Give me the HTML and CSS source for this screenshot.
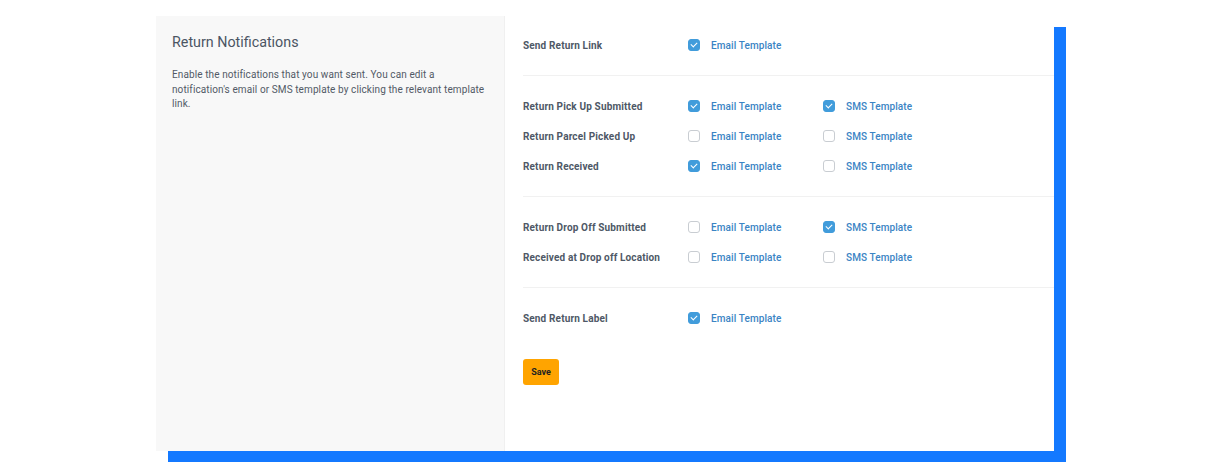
FILE: index.html
```html
<!DOCTYPE html>
<html lang="en">
<head>
    <meta charset="UTF-8">
    <title>Return Notifications</title>
    <link rel="stylesheet" href="styles.css">
</head>
<body>
<div class="page">
    <div class="card">
        <div class="intro">
            <h2 class="intro-title">Return Notifications</h2>
            <p class="intro-text">Enable the notifications that you want sent. You can edit a notification's email or SMS template by clicking the relevant template link.</p>
        </div>

        <div class="settings">
            <div class="section">
                <div class="row">
                    <div class="label">Send Return Link</div>
                    <div class="option"><span class="check on"></span><a href="#">Email Template</a></div>
                </div>
            </div>

            <div class="section">
                <div class="row">
                    <div class="label">Return Pick Up Submitted</div>
                    <div class="option"><span class="check on"></span><a href="#">Email Template</a></div>
                    <div class="option"><span class="check on"></span><a href="#">SMS Template</a></div>
                </div>
                <div class="row">
                    <div class="label">Return Parcel Picked Up</div>
                    <div class="option"><span class="check"></span><a href="#">Email Template</a></div>
                    <div class="option"><span class="check"></span><a href="#">SMS Template</a></div>
                </div>
                <div class="row">
                    <div class="label">Return Received</div>
                    <div class="option"><span class="check on"></span><a href="#">Email Template</a></div>
                    <div class="option"><span class="check"></span><a href="#">SMS Template</a></div>
                </div>
            </div>

            <div class="section">
                <div class="row">
                    <div class="label">Return Drop Off Submitted</div>
                    <div class="option"><span class="check"></span><a href="#">Email Template</a></div>
                    <div class="option"><span class="check on"></span><a href="#">SMS Template</a></div>
                </div>
                <div class="row">
                    <div class="label">Received at Drop off Location</div>
                    <div class="option"><span class="check"></span><a href="#">Email Template</a></div>
                    <div class="option"><span class="check"></span><a href="#">SMS Template</a></div>
                </div>
            </div>

            <div class="section last">
                <div class="row">
                    <div class="label">Send Return Label</div>
                    <div class="option"><span class="check on"></span><a href="#">Email Template</a></div>
                </div>
            </div>

            <button class="save">Save</button>
        </div>
    </div>
</div>
</body>
</html>
```

FILE: styles.css
```css
body {
    margin: 0;
    background: white;
    font-family: Roboto, "Liberation Sans", sans-serif;
}
.page {
    height: 475px;
    box-sizing: border-box;
    padding: 16px 0 0 156px;
}
.card {
    width: 898px;
    height: 435px;
    display: flex;
    background: white;
    box-shadow: 12px 11px 0 #1479ff;
}
.intro {
    width: 320px;
    padding: 18px 12px 18px 16px;
    background: #f8f8f8;
    border-right: 1px solid #f0f0f0;
}
.intro-title {
    margin: 0;
    font-size: 14.3px;
    font-weight: 400;
    color: #4b5563;
}
.intro-text {
    margin: 18px 0 0;
    font-size: 10px;
    font-weight: 400;
    line-height: 14.5px;
    letter-spacing: 0.1px;
    color: #525a66;
}
.settings {
    flex: 1;
    padding-left: 18px;
}
.section {
    padding: 14px 0 15px;
    border-bottom: 1px solid #f1f1f1;
}
.section + .section {
    padding-top: 15px;
}
.section.last {
    border-bottom: none;
}
.row {
    height: 30px;
    display: flex;
    align-items: center;
}
.label {
    width: 165px;
    font-size: 10px;
    font-weight: 700;
    letter-spacing: 0.15px;
    color: #4e5866;
}
.option {
    width: 135px;
    display: flex;
    align-items: center;
}
.option a {
    font-size: 10px;
    font-weight: 500;
    letter-spacing: 0.1px;
    color: #3b84c4;
    text-decoration: none;
}
.check {
    width: 10px;
    height: 10px;
    margin-right: 11px;
    border: 1px solid #c9cdd2;
    border-radius: 3px;
    background: white;
    position: relative;
}
.check.on {
    background: #419cdb;
    border-color: #419cdb;
}
.check.on::after {
    content: "";
    position: absolute;
    left: 3px;
    top: 1px;
    width: 3px;
    height: 5px;
    border: solid white;
    border-width: 0 1.5px 1.5px 0;
    transform: rotate(45deg);
}
.save {
    margin-top: 11px;
    width: 36px;
    height: 26px;
    padding: 0;
    background: #ffa400;
    color: #222;
    border: none;
    border-radius: 3px;
    font-family: Roboto, "Liberation Sans", sans-serif;
    font-size: 9px;
    font-weight: 700;
    cursor: pointer;
}
```
